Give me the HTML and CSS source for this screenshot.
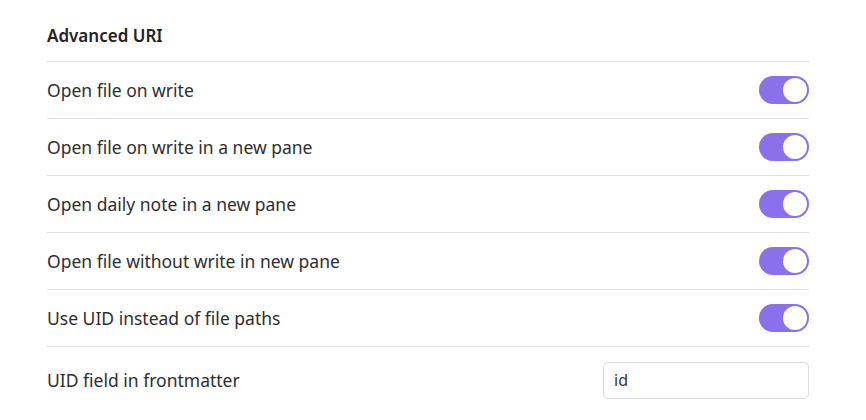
FILE: index.html
```html
<!DOCTYPE html>
<html>
<head>
<meta charset="utf-8">
<link rel="stylesheet" href="styles.css">
</head>
<body>
<div class="settings">
  <div class="heading">Advanced URI</div>
  <div class="row"><div class="label">Open file on write</div><div class="toggle"><span class="knob"></span></div></div>
  <div class="row"><div class="label">Open file on write in a new pane</div><div class="toggle"><span class="knob"></span></div></div>
  <div class="row"><div class="label">Open daily note in a new pane</div><div class="toggle"><span class="knob"></span></div></div>
  <div class="row"><div class="label">Open file without write in new pane</div><div class="toggle"><span class="knob"></span></div></div>
  <div class="row"><div class="label">Use UID instead of file paths</div><div class="toggle"><span class="knob"></span></div></div>
  <div class="row last"><div class="label">UID field in frontmatter</div><input class="text-input" type="text" value="id"></div>
</div>
</body>
</html>
```
FILE: styles.css
```css
html, body {
  margin: 0;
  padding: 0;
  background: #ffffff;
}
body {
  font-family: "Noto Sans", "Open Sans", sans-serif;
  color: #222222;
}
.settings {
  width: 762px;
  margin-left: 47px;
  padding-top: 23px;
}
.heading {
  font-size: 17px;
  font-weight: 600;
  color: #222222;
  height: 38px;
  line-height: 26px;
  border-bottom: 1px solid #e0e0e0;
}
.row {
  display: flex;
  align-items: center;
  justify-content: space-between;
  height: 56px;
  border-bottom: 1px solid #e0e0e0;
}
.row.last {
  border-bottom: none;
  height: 66px;
}
.label {
  font-size: 17.5px;
  font-weight: 400;
  color: #2e2e2e;
}
.toggle {
  width: 50px;
  height: 28px;
  border-radius: 14px;
  background: #8a70ea;
  display: flex;
  align-items: center;
  justify-content: flex-end;
  padding: 0 2px;
  box-sizing: border-box;
}
.knob {
  width: 24px;
  height: 24px;
  border-radius: 50%;
  background: #ffffff;
}
.text-input {
  width: 206px;
  height: 37px;
  box-sizing: border-box;
  border: 1px solid #dcdcdc;
  border-radius: 5px;
  padding: 0 10px;
  font-family: inherit;
  font-size: 16px;
  font-weight: 400;
  color: #333333;
  outline: none;
}
```
